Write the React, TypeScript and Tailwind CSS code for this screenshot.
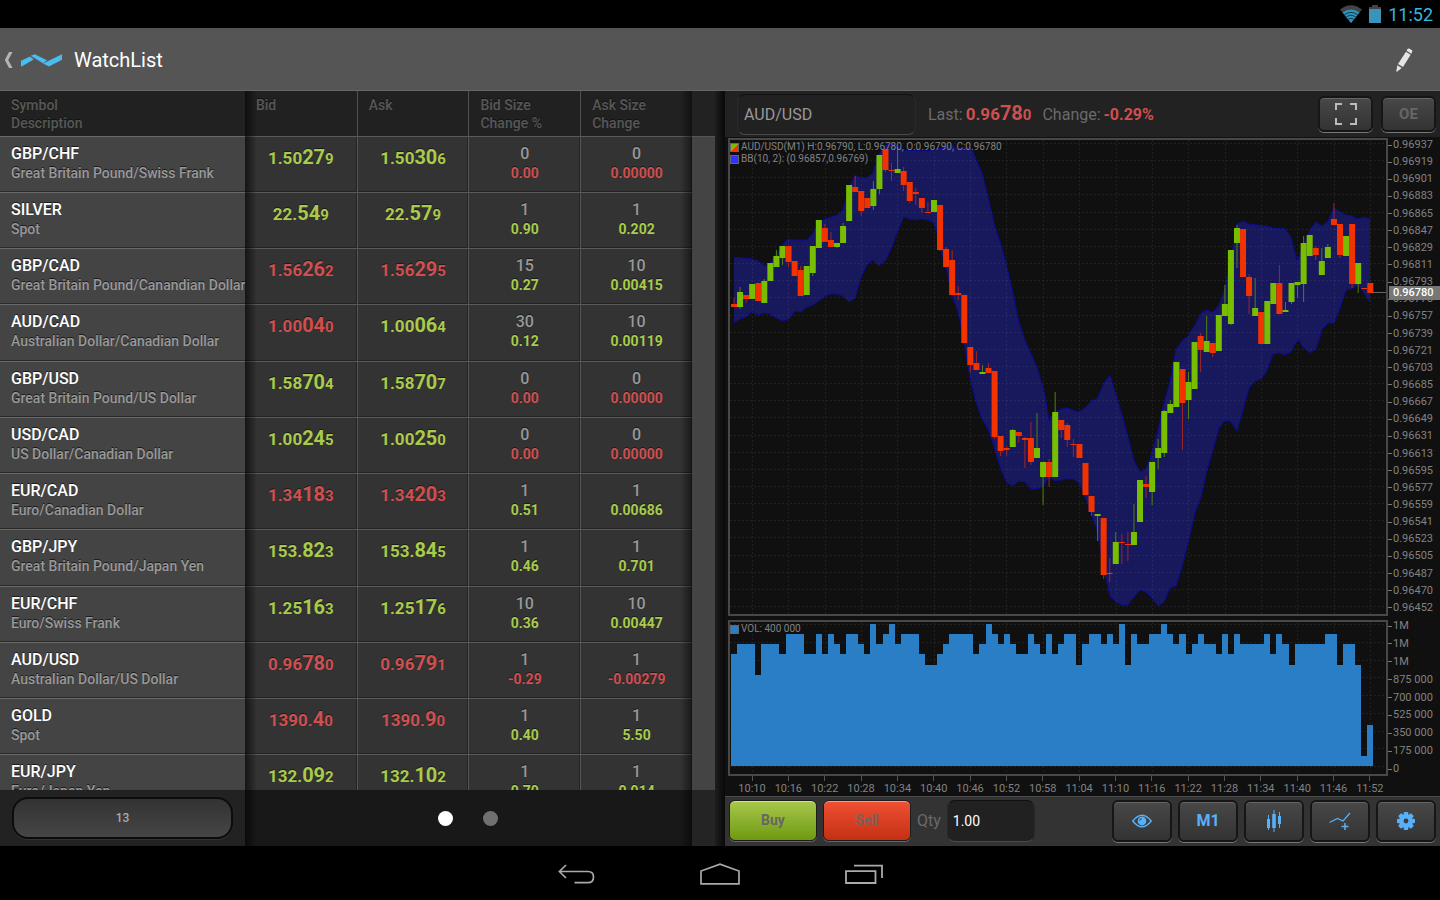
import React from 'react';

interface IQuote {
  symbol: string;
  description: string;
  bid: [string, string, string];
  ask: [string, string, string];
  bidUp: boolean;
  askUp: boolean;
  bidSize: string;
  askSize: string;
  changePct: string;
  change: string;
  changeUp: boolean;
}

const quote = (
  symbol: string,
  description: string,
  bid: string,
  ask: string,
  dirs: string,
  sizes: string,
  changes: string
): IQuote => {
  const [bidSize, askSize] = sizes.split('|');
  const [changePct, change] = changes.split('|');
  return {
    symbol,
    description,
    bid: bid.split('|') as [string, string, string],
    ask: ask.split('|') as [string, string, string],
    bidUp: dirs[0] === 'u',
    askUp: dirs[1] === 'u',
    changeUp: dirs[2] === 'u',
    bidSize,
    askSize,
    changePct,
    change,
  };
};

const quotes: IQuote[] = [
  quote('GBP/CHF', 'Great Britain Pound/Swiss Frank', '1.50|27|9', '1.50|30|6', 'uud', '0|0', '0.00|0.00000'),
  quote('SILVER', 'Spot', '22.|54|9', '22.|57|9', 'uuu', '1|1', '0.90|0.202'),
  quote('GBP/CAD', 'Great Britain Pound/Canandian Dollar', '1.56|26|2', '1.56|29|5', 'ddu', '15|10', '0.27|0.00415'),
  quote('AUD/CAD', 'Australian Dollar/Canadian Dollar', '1.00|04|0', '1.00|06|4', 'duu', '30|10', '0.12|0.00119'),
  quote('GBP/USD', 'Great Britain Pound/US Dollar', '1.58|70|4', '1.58|70|7', 'uud', '0|0', '0.00|0.00000'),
  quote('USD/CAD', 'US Dollar/Canadian Dollar', '1.00|24|5', '1.00|25|0', 'uud', '0|0', '0.00|0.00000'),
  quote('EUR/CAD', 'Euro/Canadian Dollar', '1.34|18|3', '1.34|20|3', 'ddu', '1|1', '0.51|0.00686'),
  quote('GBP/JPY', 'Great Britain Pound/Japan Yen', '153.|82|3', '153.|84|5', 'uuu', '1|1', '0.46|0.701'),
  quote('EUR/CHF', 'Euro/Swiss Frank', '1.25|16|3', '1.25|17|6', 'uuu', '10|10', '0.36|0.00447'),
  quote('AUD/USD', 'Australian Dollar/US Dollar', '0.96|78|0', '0.96|79|1', 'ddd', '1|1', '-0.29|-0.00279'),
  quote('GOLD', 'Spot', '1390.|4|0', '1390.|9|0', 'ddu', '1|1', '0.40|5.50'),
  quote('EUR/JPY', 'Euro/Japan Yen', '132.|09|2', '132.|10|2', 'uuu', '1|1', '0.70|0.914'),
];

// one minute candles: direction, body top, body bottom, wick top, wick bottom
const candles = `d304,307,298,307 u292,307,287,309 d295,299,295,303 u284,299,284,299 d283,301,283,301
u281,303,279,303 u263,281,263,281 u256,267,250,267 u246,258,246,265 d246,262,246,267
d261,276,261,276 d270,296,266,296 u266,295,266,295 u246,273,246,276 u220,248,220,248
d228,242,224,242 d240,247,232,247 u243,247,243,248 u226,243,223,243 u185,221,185,221
d187,192,176,192 d191,211,191,216 d198,208,198,208 u189,206,181,210 u155,189,155,194
d149,170,149,172 d170,171,163,181 u169,173,147,173 d171,185,167,191 d182,201,182,203
d192,194,188,205 d198,208,198,213 d212,213,202,213 u200,212,200,212 d205,250,205,251
d249,267,247,267 d260,295,250,295 d293,295,286,300 d295,343,295,343 d347,365,347,372
d363,370,351,370 u372,374,365,374 d368,373,363,373 d371,437,371,439 d436,451,436,456
d448,450,446,456 u430,447,429,447 d432,436,432,443 d438,440,437,468 d438,462,422,465
u448,458,413,458 u462,477,462,505 d462,477,459,487 u412,477,392,477 d420,430,420,438
d425,440,423,447 d444,445,439,457 d444,458,444,458 d463,495,463,495 d496,512,496,516
u514,516,514,541 d518,575,518,579 d573,574,558,582 u542,564,532,564 d542,543,534,564
d544,545,532,561 u532,545,504,545 u480,522,480,522 d484,487,476,498 u462,492,462,505
u448,458,439,469 u411,453,410,457 u404,413,400,413 u362,407,362,407 d369,403,369,450
u382,400,372,419 u342,389,342,389 d336,350,333,372 u341,352,316,352 d343,353,343,357
u315,351,315,351 u304,316,285,316 u250,324,250,325 u228,243,225,268 d229,277,229,277
d277,296,274,314 u308,316,278,316 d312,344,312,344 u301,344,301,344 u283,304,283,304
d283,314,265,314 u310,312,302,312 u283,302,283,304 u282,285,282,298 u243,284,236,302
u235,256,235,256 d248,255,246,260 u261,275,248,275 u247,258,244,258 d219,225,203,225
d224,255,224,258 u236,256,236,256 d224,284,224,288 u263,284,263,293 d288,289,288,289
d283,293,283,293`
  .split(/\s+/)
  .map((item) => ({
    up: item[0] === 'u',
    values: item.slice(1).split(',').map(Number),
  }));

const bandUpper =
  '734,257 752,259 758,261 765,266 770,263 776,255 783,244 788,239 792,240 807,240 813,233 819,222 825,219 831,217 837,215 843,210 849,187 855,175 861,178 867,178 873,173 878,155 886,145 892,144 898,146 904,150 925,151 937,149 946,147 951,144 957,149 970,147 972,150 982,173 988,197 995,227 1001,244 1007,267 1013,293 1019,322 1024,338 1029,349 1037,368 1043,387 1047,407 1049,421 1055,412 1061,409 1067,408 1073,410 1079,412 1085,408 1091,401 1097,399 1104,383 1110,375 1116,395 1122,415 1128,437 1134,461 1140,472 1146,469 1152,452 1158,430 1164,403 1170,382 1176,349 1183,340 1188,336 1195,325 1201,313 1207,310 1213,312 1219,305 1225,288 1231,258 1237,224 1243,221 1249,224 1267,226 1273,228 1285,229 1291,237 1297,261 1303,247 1310,230 1316,222 1322,226 1328,221 1334,208 1340,212 1346,215 1352,216 1358,219 1364,217 1370,219';

const bandLower =
  '734,323 740,319 746,317 752,312 758,315 764,313 770,314 776,318 783,321 789,319 795,311 801,312 807,307 813,305 819,301 825,296 831,294 837,294 843,296 849,302 855,298 861,277 867,265 873,260 879,266 886,260 892,247 898,230 904,217 910,219 916,220 922,219 928,220 934,223 937,232 940,247 946,267 952,295 958,312 964,340 967,360 970,377 976,402 982,419 988,429 994,447 1001,470 1007,483 1013,486 1019,481 1025,482 1031,489 1037,489 1043,487 1049,477 1055,481 1067,479 1073,479 1079,483 1085,497 1091,514 1097,530 1104,570 1110,596 1116,602 1122,605 1128,605 1134,597 1140,590 1146,592 1152,598 1158,606 1164,602 1170,588 1176,586 1182,567 1188,543 1195,513 1201,497 1207,470 1213,450 1219,428 1225,420 1231,422 1237,431 1243,410 1249,388 1255,381 1261,379 1267,371 1273,354 1279,353 1285,355 1291,352 1298,339 1303,347 1310,353 1316,349 1319,340 1322,329 1328,323 1334,323 1340,308 1346,290 1352,289 1358,285 1364,293 1370,302';

// volume per minute, in hundreds of thousands
const volumes = [
  11, 12, 12, 12, 9, 12, 12, 12, 11, 13, 13, 13, 11, 11, 13, 11, 13, 12, 11, 13, 13,
  12, 11, 14, 12, 13, 14, 12, 13, 13, 13, 11, 10, 10, 11, 12, 13, 13, 13, 13, 11, 12,
  14, 13, 12, 13, 12, 11, 11, 13, 12, 11, 13, 11, 12, 13, 13, 10, 12, 13, 13, 12, 13,
  12, 14, 10, 13, 12, 12, 13, 13, 14, 13, 12, 13, 11, 12, 13, 12, 12, 11, 13, 11, 13,
  12, 12, 12, 12, 13, 11, 13, 12, 10, 12, 12, 12, 12, 12, 13, 13, 10, 12, 12, 10, 1, 4,
];

const prices = [
  '0.96937', '0.96919', '0.96901', '0.96883', '0.96865', '0.96847', '0.96829',
  '0.96811', '0.96793', '0.96775', '0.96757', '0.96739', '0.96721', '0.96703',
  '0.96685', '0.96667', '0.96649', '0.96631', '0.96613', '0.96595', '0.96577',
  '0.96559', '0.96541', '0.96523', '0.96505', '0.96487', '0.96470', '0.96452',
];

const volumeTicks = ['1M', '1M', '1M', '875 000', '700 000', '525 000', '350 000', '175 000', '0'];

const times = [
  '10:10', '10:16', '10:22', '10:28', '10:34', '10:40', '10:46', '10:52', '10:58',
  '11:04', '11:10', '11:16', '11:22', '11:28', '11:34', '11:40', '11:46', '11:52',
];

const STEP = 6.06;
const candleX = (index: number) => 734 + index * STEP;
const gridX = times.map((_, index) => 752.5 + index * 36.35);

function Price({ parts, up }: { parts: [string, string, string]; up: boolean }) {
  return (
    <span className={up ? 'text-[#a9cb4b]' : 'text-[#cf4f4f]'}>
      {parts[0]}
      <span className="text-[20px]">{parts[1]}</span>
      <span className="text-[15px]">{parts[2]}</span>
    </span>
  );
}

function StatusBar() {
  return (
    <div className="flex h-7 shrink-0 items-center justify-end gap-[7px] bg-black pr-[7px] text-[18px] text-[#33b5e5]">
      <svg className="h-[18px] w-[22px]" viewBox="0 0 22 18">
        <path d="M0 4.5 Q11 -4 22 4.5 L11 18 Z" fill="#444" />
        <path d="M2.6 7.6 Q11 1.4 19.4 7.6 L11 18 Z" fill="#2f94bd" />
        <path d="M4.4 9.8 Q11 5 17.6 9.8" fill="none" stroke="#103a4a" strokeWidth="1" />
        <path d="M6.3 12 Q11 8.6 15.7 12" fill="none" stroke="#103a4a" strokeWidth="1" />
        <path d="M8.2 14.3 Q11 12.2 13.8 14.3" fill="none" stroke="#103a4a" strokeWidth="1" />
      </svg>
      <svg className="h-[18px] w-3" viewBox="0 0 12 18">
        <path d="M3 0h6v2h3v3H0V2h3z" fill="#444" />
        <path d="M0 4h12v14H0z" fill="#3a94b8" />
      </svg>
      <span>11:52</span>
    </div>
  );
}

function Header() {
  return (
    <header className="flex h-[63px] shrink-0 items-center border-b border-[#666] bg-[#555] pt-0.5 pr-[27px] pl-1">
      <a href="#back" aria-label="Back" className="flex items-center gap-2">
        <svg className="h-4 w-[9px]" viewBox="0 0 9 16">
          <path d="M8.6 0H5L0.8 8L5 16h3.6L4.2 8z" fill="#b4b4b4" />
        </svg>
        <svg className="h-[13px] w-[41px]" viewBox="0 0 123 38">
          <path d="M0 20L27 7L38 16L2 37H0z" fill="#4abdf0" />
          <path d="M29 5L41 0L78 18L66 27z" fill="#4abdf0" />
          <path d="M66 28L123 0V17L84 37z" fill="#4abdf0" />
        </svg>
      </a>
      <h1 className="ml-3 flex-1 text-[20px] text-white">WatchList</h1>
      <button type="button" aria-label="Edit">
        <svg className="h-6 w-[17px]" viewBox="0 0 51 72">
          <path d="M34 4Q36 0 41 2L47 6Q51 8 48 13L46 17L32 8z" fill="#e4e4e4" />
          <path d="M30 11L44 20L21 57L6 48z" fill="#e4e4e4" />
          <path d="M4 52L17 60L3 71Q1 72 1 69z" fill="#e4e4e4" />
        </svg>
      </button>
    </header>
  );
}

function WatchTable() {
  const head = 'h-[45px] pt-[5px] pl-[11px] text-left align-top font-medium bg-[#212121]';
  const headLine = 'border-l border-[#505050]';
  const cell =
    'border-t border-t-[#5a5a5a] bg-[#333] px-0 pt-[7px] pb-0 text-center align-top shadow-[inset_-1px_-1px_0_#232323]';
  const line = 'border-l border-l-[#555]';

  return (
    <table className="w-full table-fixed border-separate border-spacing-0 text-[14px] leading-[18px] font-bold">
      <thead className="text-[#585858] [text-shadow:0_-1px_0_#111]">
        <tr>
          <th className={`w-[35.4%] ${head}`}>
            Symbol
            <br />
            Description
          </th>
          <th className={head}>Bid</th>
          <th className={`${head} ${headLine}`}>Ask</th>
          <th className={`${head} ${headLine}`}>
            Bid Size
            <br />
            Change %
          </th>
          <th className={`${head} ${headLine}`}>
            Ask Size
            <br />
            Change
          </th>
        </tr>
      </thead>
      <tbody className="[text-shadow:0_-1px_0_#1a1a1a]">
        {quotes.map((item) => (
          <tr key={item.symbol} className="h-[56px] nth-[4n]:h-[57px]">
            <td className="border-t border-t-[#6a6a6a] bg-[#444] pt-[7px] pr-0 pb-0 pl-[11px] text-left align-top font-medium whitespace-nowrap shadow-[inset_0_-1px_0_#2a2a2a]">
              <div className="text-[16px] leading-5 text-white">{item.symbol}</div>
              <div className="text-[#999]">{item.description}</div>
            </td>
            <td className={`${cell} text-[17px] leading-[26px]`}>
              <Price parts={item.bid} up={item.bidUp} />
            </td>
            <td className={`${cell} ${line} text-[17px] leading-[26px]`}>
              <Price parts={item.ask} up={item.askUp} />
            </td>
            <td className={`${cell} ${line}`}>
              <div className="text-[16px] leading-5 font-medium text-[#999]">{item.bidSize}</div>
              <div className={item.changeUp ? 'text-[#a9cb4b]' : 'text-[#cf4f4f]'}>
                {item.changePct}
              </div>
            </td>
            <td className={`${cell} ${line}`}>
              <div className="text-[16px] leading-5 font-medium text-[#999]">{item.askSize}</div>
              <div className={item.changeUp ? 'text-[#a9cb4b]' : 'text-[#cf4f4f]'}>
                {item.change}
              </div>
            </td>
          </tr>
        ))}
      </tbody>
    </table>
  );
}

function WatchList() {
  return (
    <section className="flex min-h-0 min-w-0">
      <div className="relative flex min-h-0 min-w-0 flex-1 flex-col">
        <div className="min-h-0 flex-1 overflow-hidden">
          <WatchTable />
        </div>
        <div className="flex h-14 shrink-0 bg-[#181818]">
          <div className="flex w-[35.4%] items-center bg-[#222] px-3">
            <button
              type="button"
              className="h-[42px] w-full rounded-2xl border-2 border-[#0c0c0c] bg-linear-to-b from-[#333] to-[#464646] text-[12px] font-medium text-[#aaa] shadow-[0_1px_0_#333]"
            >
              13
            </button>
          </div>
          <div className="flex flex-1 items-center justify-center gap-[30px]">
            <button type="button" aria-label="Page 1" className="size-[15px] rounded-full bg-white" />
            <button type="button" aria-label="Page 2" className="size-[15px] rounded-full bg-[#707070]" />
          </div>
        </div>
        <div className="pointer-events-none absolute inset-y-0 left-[35.4%] w-3 bg-linear-to-r from-black/60 to-transparent" />
        <div className="pointer-events-none absolute inset-y-0 right-0 w-3 bg-linear-to-l from-black/50 to-transparent" />
      </div>
      <div className="flex w-[23px] flex-col">
        <div className="h-[45px] bg-[#222]" />
        <div className="flex-1 border-t border-[#555] bg-[#444]" />
        <div className="h-14 bg-[#242424]" />
      </div>
      <div className="w-[10px] bg-linear-to-r from-[#1e1e1e] to-[#090909]" />
    </section>
  );
}

function PriceChart() {
  const lower = bandLower.split(' ').reverse().join(' ');
  return (
    <svg className="size-full" viewBox="730 140 656 474" preserveAspectRatio="none">
      <polygon points={`${bandUpper} ${lower}`} fill="#18185c" />
      <polyline points={bandUpper} fill="none" stroke="#0a0a96" />
      <polyline points={bandLower} fill="none" stroke="#0a0a96" />
      <g stroke="#777" strokeOpacity="0.16" strokeDasharray="2 2">
        {prices.map((price, index) => (
          <line key={price} x1="730" x2="1386" y1={143.5 + Math.round(index * 17.15)} y2={143.5 + Math.round(index * 17.15)} />
        ))}
        {gridX.map((x) => (
          <line key={x} x1={Math.floor(x) + 0.5} x2={Math.floor(x) + 0.5} y1="140" y2="614" />
        ))}
      </g>
      {candles.map(({ up, values: [top, bottom, high, low] }, index) => (
        <g key={index}>
          <line
            x1={candleX(index)}
            x2={candleX(index)}
            y1={high}
            y2={low}
            stroke={up ? '#4f8010' : '#a02626'}
          />
          <rect
            x={candleX(index) - 3}
            y={top}
            width="6"
            height={bottom - top}
            fill={up ? '#78be00' : '#f23300'}
          />
        </g>
      ))}
      <path d="M1373 292.5H1386" stroke="#666" />
    </svg>
  );
}

function VolumeChart() {
  return (
    <svg className="size-full" viewBox="730 622 656 152" preserveAspectRatio="none">
      <g stroke="#777" strokeOpacity="0.16" strokeDasharray="2 2">
        {volumeTicks.map((_, index) => (
          <line key={index} x1="730" x2="1386" y1={624.5 + Math.round(index * 17.75)} y2={624.5 + Math.round(index * 17.75)} />
        ))}
        {gridX.map((x) => (
          <line key={x} x1={Math.floor(x) + 0.5} x2={Math.floor(x) + 0.5} y1="622" y2="774" />
        ))}
      </g>
      {volumes.map((volume, index) => {
        const left = Math.round(candleX(index) - 3);
        const right = Math.round(candleX(index + 1) - 3);
        const top = Math.round(766 - volume * 10.15);
        return (
          <rect key={index} x={left} y={top} width={right - left} height={766 - top} fill="#297ec6" />
        );
      })}
    </svg>
  );
}

function AxisLabel({ children }: { children: React.ReactNode }) {
  return (
    <div className="flex h-3 items-center gap-px leading-3">
      <span className="h-px w-1 bg-[#777]" />
      {children}
    </div>
  );
}

function Charts() {
  return (
    <div className="flex min-h-0 flex-1 flex-col bg-[#101010] pt-px pl-[3px] text-[11px] text-[#828282]">
      <div className="flex min-h-0 flex-1">
        <div className="relative min-w-0 flex-1 border-2 border-[#484848]">
          <PriceChart />
          <div className="absolute top-px left-0 text-[10px] leading-[12px]">
            <div className="flex items-center gap-0.5">
              <span className="size-[9px] border border-[#666] bg-linear-135 from-[#78be00] from-50% to-[#f23300] to-50%" />
              AUD/USD(M1) H:0.96790, L:0.96780, O:0.96790, C:0.96780
            </div>
            <div className="flex items-center gap-0.5">
              <span className="size-[9px] border border-[#666] bg-[#3030ff]" />
              BB(10, 2): (0.96857,0.96769)
            </div>
          </div>
        </div>
        <div className="relative flex w-[52px] flex-col justify-between pt-px pb-[2px]">
          {prices.map((price) => (
            <AxisLabel key={price}>{price}</AxisLabel>
          ))}
          <div className="absolute inset-x-0 top-[31%] ml-px bg-[#777] pl-1 leading-[14px] font-medium text-white">
            0.96780
          </div>
        </div>
      </div>
      <div className="mt-1 flex h-[156px] shrink-0">
        <div className="relative min-w-0 flex-1 border-2 border-[#484848]">
          <VolumeChart />
          <div className="absolute top-px left-0 flex items-center gap-0.5 text-[10px] leading-[12px]">
            <span className="size-[9px] border border-[#666] bg-[#297ec6]" />
            VOL: 400 000
          </div>
        </div>
        <div className="flex w-[52px] flex-col justify-between pb-px">
          {volumeTicks.map((tick, index) => (
            <AxisLabel key={index}>{tick}</AxisLabel>
          ))}
        </div>
      </div>
      <div className="flex h-5 shrink-0 justify-between pr-[52px] pl-[6px]">
        {times.map((time) => (
          <div key={time} className="flex w-9 flex-col items-center">
            <span className="h-[5px] w-px bg-[#555]" />
            <span className="leading-[15px]">{time}</span>
          </div>
        ))}
      </div>
    </div>
  );
}

const darkButton =
  'flex items-center justify-center rounded-md border-2 border-[#161616] bg-linear-to-b from-[#484848] to-[#333] font-bold shadow-[0_1px_0_#777,inset_0_1px_0_#666]';

function ToolButton({ label, children }: { label: string; children: React.ReactNode }) {
  return (
    <button type="button" aria-label={label} className={`h-[42px] w-[60px] text-[16px] text-[#58b0f8] ${darkButton}`}>
      {children}
    </button>
  );
}

function ChartPanel() {
  return (
    <section className="flex min-h-0 min-w-0 flex-col">
      <div className="flex h-[46px] shrink-0 items-center bg-[#222] pr-1 pl-3">
        <input
          type="text"
          aria-label="Symbol"
          defaultValue="AUD/USD"
          className="h-[41px] w-[179px] rounded-lg border border-x-[#2a2a2a] border-t-[#111] border-b-[#4a4a4a] bg-[#212121] px-[6px] text-[16px] text-[#999] outline-none"
        />
        <div className="ml-3 flex flex-1 items-baseline gap-[3px] text-[16px] whitespace-nowrap text-[#6a6a6a]">
          <span>Last:</span>
          <span className="text-[17px] leading-6 font-bold">
            <Price parts={['0.96', '78', '0']} up={false} />
          </span>
          <span className="ml-2">Change:</span>
          <span className="font-bold text-[#cf4f4f]">-0.29%</span>
        </div>
        <div className="flex gap-2">
          <button type="button" aria-label="Full screen" className={`h-9 w-[55px] ${darkButton}`}>
            <svg className="size-[22px]" viewBox="0 0 22 22">
              <path d="M1 7V1h6M15 1h6v6M21 15v6h-6M7 21H1v-6" fill="none" stroke="#bbb" strokeWidth="2" />
            </svg>
          </button>
          <button type="button" className={`h-9 w-[55px] text-[15px] text-[#666] ${darkButton}`}>
            OE
          </button>
        </div>
      </div>
      <Charts />
      <div className="flex h-[50px] shrink-0 items-center border-t border-[#4a4a4a] bg-[#333] px-1 pb-[2px]">
        <button
          type="button"
          className="h-[41px] w-[88px] rounded-md border border-[#1c1c1c] bg-linear-to-b from-[#a8c84a] to-[#6f9a0a] text-[14px] font-bold text-[#666] shadow-[0_1px_0_#666,inset_0_1px_0_#cfe58a]"
        >
          Buy
        </button>
        <button
          type="button"
          className="ml-[6px] h-[41px] w-[88px] rounded-md border border-[#1c1c1c] bg-linear-to-b from-[#ef5033] to-[#c52f12] text-[14px] font-bold text-[#7a6259] shadow-[0_1px_0_#666,inset_0_1px_0_#ff9a88]"
        >
          Sell
        </button>
        <label htmlFor="qty" className="ml-[6px] text-[16px] text-[#6a6a6a]">
          Qty
        </label>
        <input
          id="qty"
          type="text"
          defaultValue="1.00"
          className="ml-[6px] h-[42px] w-[88px] rounded-lg border border-x-[#282828] border-t-[#111] border-b-[#4a4a4a] bg-[#212121] px-[5px] text-[14px] text-white outline-none"
        />
        <div className="ml-auto flex gap-[6px]">
          <ToolButton label="Visibility">
            <svg className="h-[14px] w-5" viewBox="0 0 20 14">
              <path d="M0.8 7Q10 -4.6 19.2 7Q10 18.6 0.8 7z" fill="none" stroke="currentColor" strokeWidth="1.5" />
              <circle cx="10" cy="7" r="4.4" fill="currentColor" />
              <path d="M7.6 6.6Q8 4.8 9.8 4.6" fill="none" stroke="#333" />
            </svg>
          </ToolButton>
          <ToolButton label="Timeframe">M1</ToolButton>
          <ToolButton label="Chart type">
            <svg className="h-[22px] w-4" viewBox="0 0 16 22">
              <path d="M2.5 5v15M8 0v22M13.5 2v16" stroke="currentColor" />
              <path d="M1 9h3v9H1zM6.2 4h3.6v14H6.2zM12 6h3v8h-3z" fill="currentColor" />
            </svg>
          </ToolButton>
          <ToolButton label="Add indicator">
            <svg className="h-[18px] w-[22px]" viewBox="0 0 22 18">
              <path d="M0.5 10.5L8.5 6.5L14 9L21 1" fill="none" stroke="currentColor" strokeWidth="1.2" />
              <path d="M16 11v7M12.5 14.5h7" stroke="currentColor" strokeWidth="1.5" />
            </svg>
          </ToolButton>
          <ToolButton label="Settings">
            <svg className="size-[18px]" viewBox="-9 -9 18 18">
              {[0, 45, 90, 135].map((angle) => (
                <rect key={angle} x="-2.3" y="-9" width="4.6" height="18" rx="1" fill="currentColor" transform={`rotate(${angle})`} />
              ))}
              <circle r="6.8" fill="currentColor" />
              <circle r="2.4" fill="#3b3b3b" />
            </svg>
          </ToolButton>
        </div>
      </div>
    </section>
  );
}

function NavBar() {
  return (
    <nav className="flex h-[54px] shrink-0 items-center justify-center bg-black pt-px">
      <button type="button" aria-label="Back" className="flex w-36 justify-center">
        <svg className="h-5 w-[37px]" viewBox="0 0 37 20" fill="none" stroke="#aaa" strokeWidth="1.7">
          <path d="M8 1L1.4 7.5L8 14M1.4 7.5H30Q35.5 7.5 35.5 13Q35.5 18.7 30 18.7H16.5" />
        </svg>
      </button>
      <button type="button" aria-label="Home" className="flex w-36 justify-center">
        <svg className="h-[22px] w-10" viewBox="0 0 40 22" fill="none" stroke="#aaa" strokeWidth="1.7">
          <path d="M1 20.8V8L20 1.2L39 8V20.8z" />
        </svg>
      </button>
      <button type="button" aria-label="Recent apps" className="flex w-36 justify-center">
        <svg className="h-5 w-[38px]" viewBox="0 0 38 20" fill="none" stroke="#aaa" strokeWidth="1.8">
          <path d="M1 7.2h29.5V19H1zM9 1.6h28V14" />
        </svg>
      </button>
    </nav>
  );
}

function App() {
  return (
    <div className="flex h-screen flex-col overflow-hidden bg-black font-[Roboto,sans-serif]">
      <StatusBar />
      <Header />
      <main className="grid min-h-0 flex-1 grid-cols-[725fr_715fr] grid-rows-[minmax(0,1fr)]">
        <WatchList />
        <ChartPanel />
      </main>
      <NavBar />
    </div>
  );
}

export default App;
